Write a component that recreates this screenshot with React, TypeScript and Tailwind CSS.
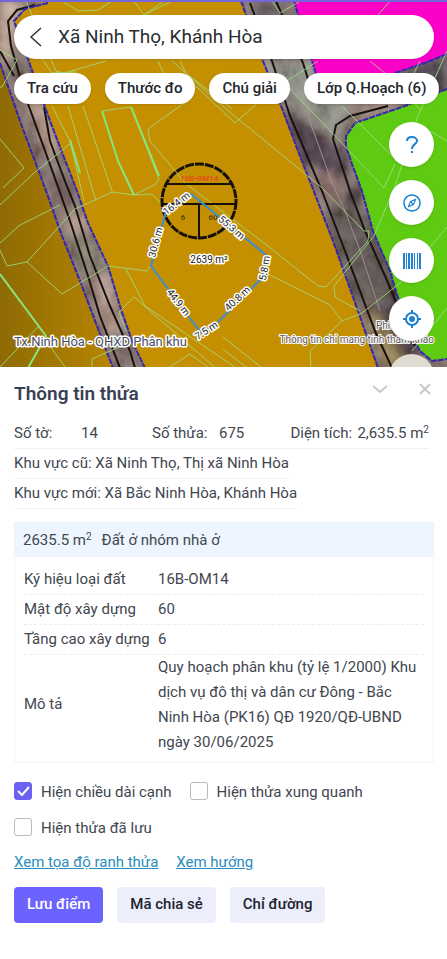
import React from "react";
import { AiOutlineCompass } from "react-icons/ai";

const chips = ["Tra cứu", "Thước đo", "Chú giải", "Lớp Q.Hoạch (6)"];

const zoningRows = [
  ["Ký hiệu loại đất", "16B-OM14"],
  ["Mật độ xây dựng", "60"],
  ["Tầng cao xây dựng", "6"],
];

const edges = [
  { x: 176, y: 202, angle: -38, text: "16.4 m" },
  { x: 232, y: 226, angle: 40, text: "55.3 m" },
  { x: 264, y: 267, angle: -80, text: "5.8 m" },
  { x: 237, y: 297, angle: -43, text: "40.8 m" },
  { x: 206, y: 329, angle: -33, text: "7.5 m" },
  { x: 179, y: 301, angle: 52, text: "44.9 m" },
  { x: 155, y: 241, angle: -75, text: "30.6 m" },
];

const parcelLines = [
  "M0 49 L17 59 L2 86 L0 86",
  "M0 138 L24 167 L3 187",
  "M0 204 L34 172 L71 142",
  "M0 242 L20 224 L60 204",
  "M0 249 L7 265 L27 261 L62 293 L108 265 L147 270 L152 262",
  "M27 261 L75 208 L112 191 L134 194 L152 193 L163 205",
  "M62 0 L78 10 L98 9 L112 0",
  "M26 0 L56 70 L64 72 L106 60",
  "M42 58 L52 72 L76 71",
  "M52 105 L70 140 L84 200",
  "M68 105 L96 200",
  "M83 105 L112 190",
  "M102 110 L131 106 L159 178 L156 183 L134 194 L118 160 Z",
  "M190 98 L148 128 L150 140 L185 182 L264 242",
  "M134 0 L144 14 L172 0",
  "M144 14 L164 0",
  "M158 60 L164 73 L198 87 L235 122",
  "M172 60 L232 113 L320 185 L364 230",
  "M180 60 L186 72 L232 108",
  "M235 122 L260 100 L290 78 L318 60",
  "M280 12 L304 -2",
  "M280 12 L272 0",
  "M264 242 L318 285 L326 286 L368 240 L369 230 L364 230",
  "M268 273 L330 304 L342 320 L362 312 L400 282 L447 226",
  "M342 320 L310 350 L311 367",
  "M223 336 L262 367",
  "M223 348 L247 367",
  "M126 268 L145 305 L223 358 L236 367",
  "M134 296 L119 311 L126 330",
  "M134 296 L190 345 L216 367",
  "M92 367 L92 358 L128 342",
  "M168 367 L190 353 L209 367",
  "M46 340 L66 367",
  "M0 366 L38 326",
  "M390 0 L378 14 M370 60 L386 73",
  "M447 50 L418 115 L395 185 L374 235 L334 285 L335 296 L360 310",
  "M290 88 L340 140 L384 187 L395 163",
  "M342 105 L392 155",
  "M420 60 L405 90 L420 109",
  "M447 140 L430 130",
  "M447 307 L412 350",
];

function MapCanvas() {
  return (
    <svg
      className="absolute inset-0 h-full w-full"
      viewBox="0 0 447 367"
      preserveAspectRatio="xMidYMid slice"
      role="img"
      aria-label="Bản đồ quy hoạch"
    >
      <defs>
        <linearGradient id="west" x1="0" x2="1">
          <stop offset="0" stopColor="#8f6b05" />
          <stop offset="1" stopColor="#b78602" />
        </linearGradient>
        <filter id="grain" x="0" y="0" width="100%" height="100%">
          <feTurbulence type="fractalNoise" baseFrequency="0.07 0.05" numOctaves="4" seed="8" />
          <feColorMatrix
            type="matrix"
            values="1 0 0 0 -0.08  1 0 0 0 -0.14  1 0 0 0 -0.14  0 0 0 0 1"
          />
        </filter>
        <filter id="soft">
          <feGaussianBlur stdDeviation="4" />
        </filter>
        <filter id="smudge">
          <feGaussianBlur stdDeviation="0.6" />
        </filter>
        <clipPath id="roads">
          <path d="M0 0 L48 2 L25 8 L14 20 L28 58 L50 120 L77 190 L88 222 L108 265 L120 305 L132 340 L145 367 L113 367 L97 325 L80 280 L62 235 L45 187 L20 120 L0 62 Z" />
          <path d="M241 0 L294 0 L316 73 L395 72 L447 53 L447 88 L405 105 L355 122 L346 135 L346 145 L352 163 L362 190 L373 230 L390 270 L405 320 L420 350 L432 360 L447 358 L447 367 L378 367 L358 310 L333 240 L311 183 L298 150 L283 110 L263 60 Z" />
        </clipPath>
      </defs>

      <rect width="447" height="367" fill="#c49002" />
      <path d="M0 62 L20 120 L45 187 L80 280 L113 367 L0 367 Z" fill="url(#west)" />
      <path d="M294 0 H447 V53 L425 62 L395 72 H316 Z" fill="#fb02c8" />
      <path
        d="M447 88 L405 105 L355 122 L346 135 L346 145 L352 163 L362 190 L373 230 L390 270 L405 320 L420 350 L432 360 L447 358 Z"
        fill="#5fca12"
      />

      <g clipPath="url(#roads)">
        <rect width="447" height="367" fill="#75645c" />
        <g filter="url(#soft)">
          <path d="M0 0 H22 L10 60 H0 Z" fill="#c9ab93" />
          <path d="M22 95 L44 95 L64 150 L50 160 Z" fill="#a88877" />
          <path d="M50 165 L76 185 L76 205 L58 205 Z" fill="#5c4540" />
          <path d="M62 208 L86 210 L90 232 L68 232 Z" fill="#b0937f" />
          <path d="M70 232 L98 245 L104 270 L82 275 Z" fill="#77775f" />
          <path d="M88 272 L112 272 L124 330 L104 330 Z" fill="#a8897a" />
          <path d="M255 60 H310 L350 112 L336 138 L275 90 Z" fill="#858b80" />
          <path d="M283 105 L345 150 L350 180 L298 160 Z" fill="#33242f" />
          <path d="M250 0 H290 V12 L255 20 Z" fill="#4c4246" />
          <path d="M306 172 L335 172 L345 200 L322 200 Z" fill="#80605a" />
          <path d="M325 205 L380 215 L400 300 L352 300 Z" fill="#453d38" />
          <path d="M345 187 L362 187 L360 207 L345 205 Z" fill="#22131f" />
          <path d="M350 108 L400 98 L375 112 Z" fill="#bc9c90" />
          <path d="M405 72 L447 56 V90 L405 96 Z" fill="#262031" />
          <path d="M370 305 L403 300 L425 352 L380 367 Z" fill="#2a1e26" />
          <path d="M365 312 L378 312 L405 362 L385 367 Z" fill="#8a7439" />
        </g>
        <rect width="447" height="367" filter="url(#grain)" opacity="0.3" />
      </g>

      <g fill="none" stroke="#17120f" strokeWidth="2">
        <path d="M35 4 L17 9 L8 20 L11 45 L27 100 L57 183 L70 220 L88 275 L100 315 L120 367" />
        <path d="M0 50 L14 75 M44 106 L50 140 L66 183 L75 205 L90 255 L110 305 L130 350 L135 367" />
        <path d="M250 2 L272 60 L290 115 L305 150 L322 190 L345 250 L375 330 L392 367" />
        <path d="M276 0 L303 62 L308 78" />
        <path d="M388 105 L350 115 L336 124 L333 138 L350 190 L365 230 L385 275 L400 310 L415 345" />
      </g>
      <path d="M308 115 L332 182 L345 210 L362 255 L380 310" fill="none" stroke="#9c8e94" strokeWidth="1" />

      <g fill="none" stroke="#3528ae" strokeWidth="2" strokeDasharray="6 1">
        <path d="M48 2 L25 8 L14 20 L28 58 L50 120 L77 190 L88 222 L108 265 L120 305 L132 340 L145 367" />
        <path d="M0 62 L20 120 L45 187 L62 235 L80 280 L97 325 L113 367" />
        <path d="M241 0 L263 60 L283 110 L298 150 L311 183 L333 240 L358 310 L378 367" />
        <path d="M294 0 L316 73 M395 72 L425 62 L447 53" />
        <path d="M447 88 L405 105 L355 122 L346 135 L346 145 L352 163 L362 190 L373 230 L390 270 L405 320 L420 350 L432 360 L447 358" />
      </g>

      <g fill="none" stroke="#9fdc84" strokeWidth="1" opacity="0.85">
        {parcelLines.map((d) => (
          <path key={d} d={d} />
        ))}
      </g>
      <g fill="none" stroke="#86e57f" strokeWidth="2">
        <path d="M0 273 L46 335 L28 367" />
        <path d="M102 110 L118 160 L134 194 M131 106 L159 175" />
        <path d="M70 139 L80 172" />
      </g>

      <g fill="none" stroke="#15110a" strokeWidth="2">
        <circle cx="199" cy="200" r="37" strokeWidth="3" strokeDasharray="9 1" />
        <path d="M167 183 H231 M163 203 H235 M199 203 V236" />
      </g>
      <text
        x="199"
        y="180"
        textAnchor="middle"
        fontSize="8"
        fontWeight="700"
        fontStyle="italic"
        fill="#ea4a18"
        filter="url(#smudge)"
      >
        16B-OM14
      </text>
      <g fontSize="8" fontWeight="700" fill="#5e4400" textAnchor="middle" filter="url(#smudge)">
        <text x="183" y="219">6</text>
        <text x="213" y="219">60</text>
      </g>

      <path
        d="M191 193 L266 254 L262 277 L218 321 L201 332 L151 265 L166 210 Z"
        fill="none"
        stroke="#3d8fce"
        strokeWidth="2"
      />

      <g
        fill="#1c1c1c"
        stroke="#ffffff"
        strokeWidth="3"
        strokeLinejoin="round"
        paintOrder="stroke"
        textAnchor="middle"
        fontSize="10"
      >
        {edges.map((edge) => (
          <text
            key={edge.text}
            x={edge.x}
            y={edge.y}
            dy="4"
            transform={`rotate(${edge.angle} ${edge.x} ${edge.y})`}
          >
            {edge.text}
          </text>
        ))}
        <text x="209" y="262">2639 m²</text>
      </g>

      <g fill="#5f5a5a" stroke="#ffffff" strokeWidth="3" strokeLinejoin="round" paintOrder="stroke">
        <text x="14" y="345" fontSize="13" fill="#4a5068">
          Tx.Ninh Hòa - QHXD Phân khu
        </text>
        <g fontSize="10" strokeWidth="2">
          <text x="376" y="328">Phiên bản</text>
          <text x="434" y="342" textAnchor="end">
            Thông tin chỉ mang tính tham khảo
          </text>
        </g>
      </g>
    </svg>
  );
}

function HelpIcon() {
  return (
    <svg width="20" height="20" viewBox="0 0 20 20" fill="none">
      <path d="M5 6 C5 3 7 2 10 2 C13 2 15 4 15 6 C15 9 10 9 10 14" stroke="currentColor" strokeWidth="2" />
      <path d="M9 16h2v2h-2z" fill="currentColor" />
    </svg>
  );
}

function BarcodeIcon() {
  return (
    <svg width="18" height="16" viewBox="0 0 18 16" fill="currentColor">
      <path d="M0 0h2v16H0zM3 0h1v16H3zM5 0h2v16H5zM8 0h2v16H8zM11 0h1v16h-1zM14 0h1v16h-1zM16 0h2v16h-2z" />
    </svg>
  );
}

function LocateIcon() {
  return (
    <svg width="20" height="20" viewBox="0 0 20 20" fill="none">
      <circle cx="10" cy="10" r="6" stroke="currentColor" strokeWidth="2" />
      <circle cx="10" cy="10" r="3" fill="currentColor" />
      <path d="M10 1v3M10 16v3M1 10h3M16 10h3" stroke="currentColor" strokeWidth="2" />
    </svg>
  );
}

const tools = [
  { label: "Trợ giúp", icon: <HelpIcon /> },
  { label: "La bàn", icon: <AiOutlineCompass size={20} /> },
  { label: "Quét mã", icon: <BarcodeIcon /> },
  { label: "Vị trí của tôi", icon: <LocateIcon /> },
];

function MapSection() {
  return (
    <section className="relative h-[367px] overflow-hidden border-t-2 border-[#7766d8]">
      <MapCanvas />
      <div className="relative flex flex-col pt-[13px] pr-[13px] pl-[14px]">
        <div className="flex h-11 items-center rounded-full bg-white pr-4 pl-3 shadow">
          <button type="button" aria-label="Quay lại" className="flex h-8 w-8 items-center text-[#2a2d33]">
            <svg width="20" height="20" viewBox="0 0 20 20" fill="none">
              <path d="M15 1 L5 10 L15 19" stroke="currentColor" strokeWidth="1.4" />
            </svg>
          </button>
          <input
            type="text"
            aria-label="Tìm kiếm"
            defaultValue="Xã Ninh Thọ, Khánh Hòa"
            className="min-w-0 flex-1 text-[19px] text-[#2a2d33] outline-none"
          />
        </div>
        <div className="mt-[14px] flex gap-[14px]">
          {chips.map((chip) => (
            <button
              key={chip}
              type="button"
              className="h-[31px] shrink-0 rounded-full bg-white px-[13px] text-[15px] font-medium whitespace-nowrap text-[#22252b] shadow"
            >
              {chip}
            </button>
          ))}
        </div>
        <div className="mt-[18px] flex flex-col items-end gap-[13px]">
          {tools.map((tool) => (
            <button
              key={tool.label}
              type="button"
              aria-label={tool.label}
              className="flex h-[45px] w-[45px] items-center justify-center rounded-full bg-white text-[#1d83cf] shadow"
            >
              {tool.icon}
            </button>
          ))}
          <button type="button" aria-label="Nền bản đồ" className="h-[45px] w-[45px] rounded-full bg-[#dedbd0]" />
        </div>
      </div>
    </section>
  );
}

type CheckProps = { id: string; label: string; checked?: boolean };

function Check({ id, label, checked }: CheckProps) {
  return (
    <div className="flex items-center gap-[9px]">
      <span className="relative h-[18px] w-[18px]">
        <input
          id={id}
          type="checkbox"
          defaultChecked={checked}
          className="peer block h-[18px] w-[18px] appearance-none rounded-[3px] border border-[#b9bbc0] bg-white checked:border-[#6a62f0] checked:bg-[#6a62f0]"
        />
        <svg
          className="pointer-events-none absolute inset-0 hidden peer-checked:block"
          width="18"
          height="18"
          viewBox="0 0 18 18"
          fill="none"
        >
          <path d="M4 9 L8 13 L15 5" stroke="#fff" strokeWidth="2" />
        </svg>
      </span>
      <label htmlFor={id} className="pt-[2px] leading-5">
        {label}
      </label>
    </div>
  );
}

function ParcelPanel() {
  return (
    <section className="bg-white pt-[10px] pr-[13px] pb-9 pl-[14px] text-[15px] text-[#41464f]">
      <div className="flex items-start justify-between">
        <h1 className="pt-[3px] text-[19px] leading-7 font-semibold text-[#3a3f55]">Thông tin thửa</h1>
        <div className="flex gap-[27px] text-[#c8c8c8]">
          <button type="button" aria-label="Thu gọn" className="flex h-6 items-center">
            <svg width="18" height="18" viewBox="0 0 18 18" fill="none">
              <path d="M2 6 L9 12 L16 6" stroke="currentColor" strokeWidth="2" />
            </svg>
          </button>
          <button type="button" aria-label="Đóng" className="flex h-6 items-center">
            <svg width="18" height="18" viewBox="0 0 18 18" fill="none">
              <path d="M4 4 L14 14 M14 4 L4 14" stroke="currentColor" strokeWidth="2" />
            </svg>
          </button>
        </div>
      </div>

      <div className="mt-[11px] flex flex-col items-start">
        <dl className="mr-[5px] flex h-[30px] items-center justify-between self-stretch border-b border-[#f3efef]">
          <div className="flex">
            <dt className="w-[67px]">Số tờ:</dt>
            <dd>14</dd>
          </div>
          <div className="flex pl-2">
            <dt className="w-[67px]">Số thửa:</dt>
            <dd>675</dd>
          </div>
          <div className="flex">
            <dt className="w-[67px]">Diện tích:</dt>
            <dd>
              2,635.5 m<sup className="text-[10px]">2</sup>
            </dd>
          </div>
        </dl>
        <p className="flex h-[30px] items-center border-b border-[#f3efef]">
          Khu vực cũ: Xã Ninh Thọ, Thị xã Ninh Hòa
        </p>
        <p className="flex h-[30px] items-center border-b border-[#f3efef]">
          Khu vực mới: Xã Bắc Ninh Hòa, Khánh Hòa
        </p>
      </div>

      <div className="mt-[13px] border border-[#f0f5fb]">
        <div className="flex h-[34px] items-center gap-[10px] bg-[#edf6fe] px-2">
          <span>
            2635.5 m<sup className="text-[10px]">2</sup>
          </span>
          <span>Đất ở nhóm nhà ở</span>
        </div>
        <div className="px-[9px] pt-[7px] pb-[7px]">
          <table className="w-full border-collapse">
            <tbody>
              {zoningRows.map(([name, value]) => (
                <tr key={name} className="h-[30px] border-b border-dashed border-[#e9edf0]">
                  <th scope="row" className="w-[134px] p-0 text-left font-normal whitespace-nowrap">
                    {name}
                  </th>
                  <td className="p-0">{value}</td>
                </tr>
              ))}
              <tr>
                <th scope="row" className="w-[134px] p-0 text-left font-normal">
                  Mô tả
                </th>
                <td className="p-0 leading-[25px]">
                  Quy hoạch phân khu (tỷ lệ 1/2000) Khu dịch vụ đô thị và dân cư Đông - Bắc Ninh Hòa (PK16)
                  QĐ 1920/QĐ-UBND ngày 30/06/2025
                </td>
              </tr>
            </tbody>
          </table>
        </div>
      </div>

      <div className="mt-[17px] flex flex-wrap gap-x-[18px] gap-y-[14px]">
        <Check id="edge-length" label="Hiện chiều dài cạnh" checked />
        <Check id="nearby" label="Hiện thửa xung quanh" />
        <Check id="saved" label="Hiện thửa đã lưu" />
      </div>

      <div className="mt-3 flex gap-[18px] leading-6 text-[#2b8dbd] underline">
        <a href="#toa-do">Xem tọa độ ranh thửa</a>
        <a href="#huong">Xem hướng</a>
      </div>

      <div className="mt-[13px] flex gap-[14px] font-medium text-[#22232e]">
        <button type="button" className="h-9 rounded bg-[#6c63ff] px-[13px] text-white">
          Lưu điểm
        </button>
        <button type="button" className="h-9 rounded bg-[#eceffb] px-[13px]">
          Mã chia sẻ
        </button>
        <button type="button" className="h-9 rounded bg-[#eceffb] px-[13px]">
          Chỉ đường
        </button>
      </div>
    </section>
  );
}

function App() {
  return (
    <main className="min-h-screen bg-white font-['Roboto',sans-serif]">
      <MapSection />
      <ParcelPanel />
    </main>
  );
}

export default App;
